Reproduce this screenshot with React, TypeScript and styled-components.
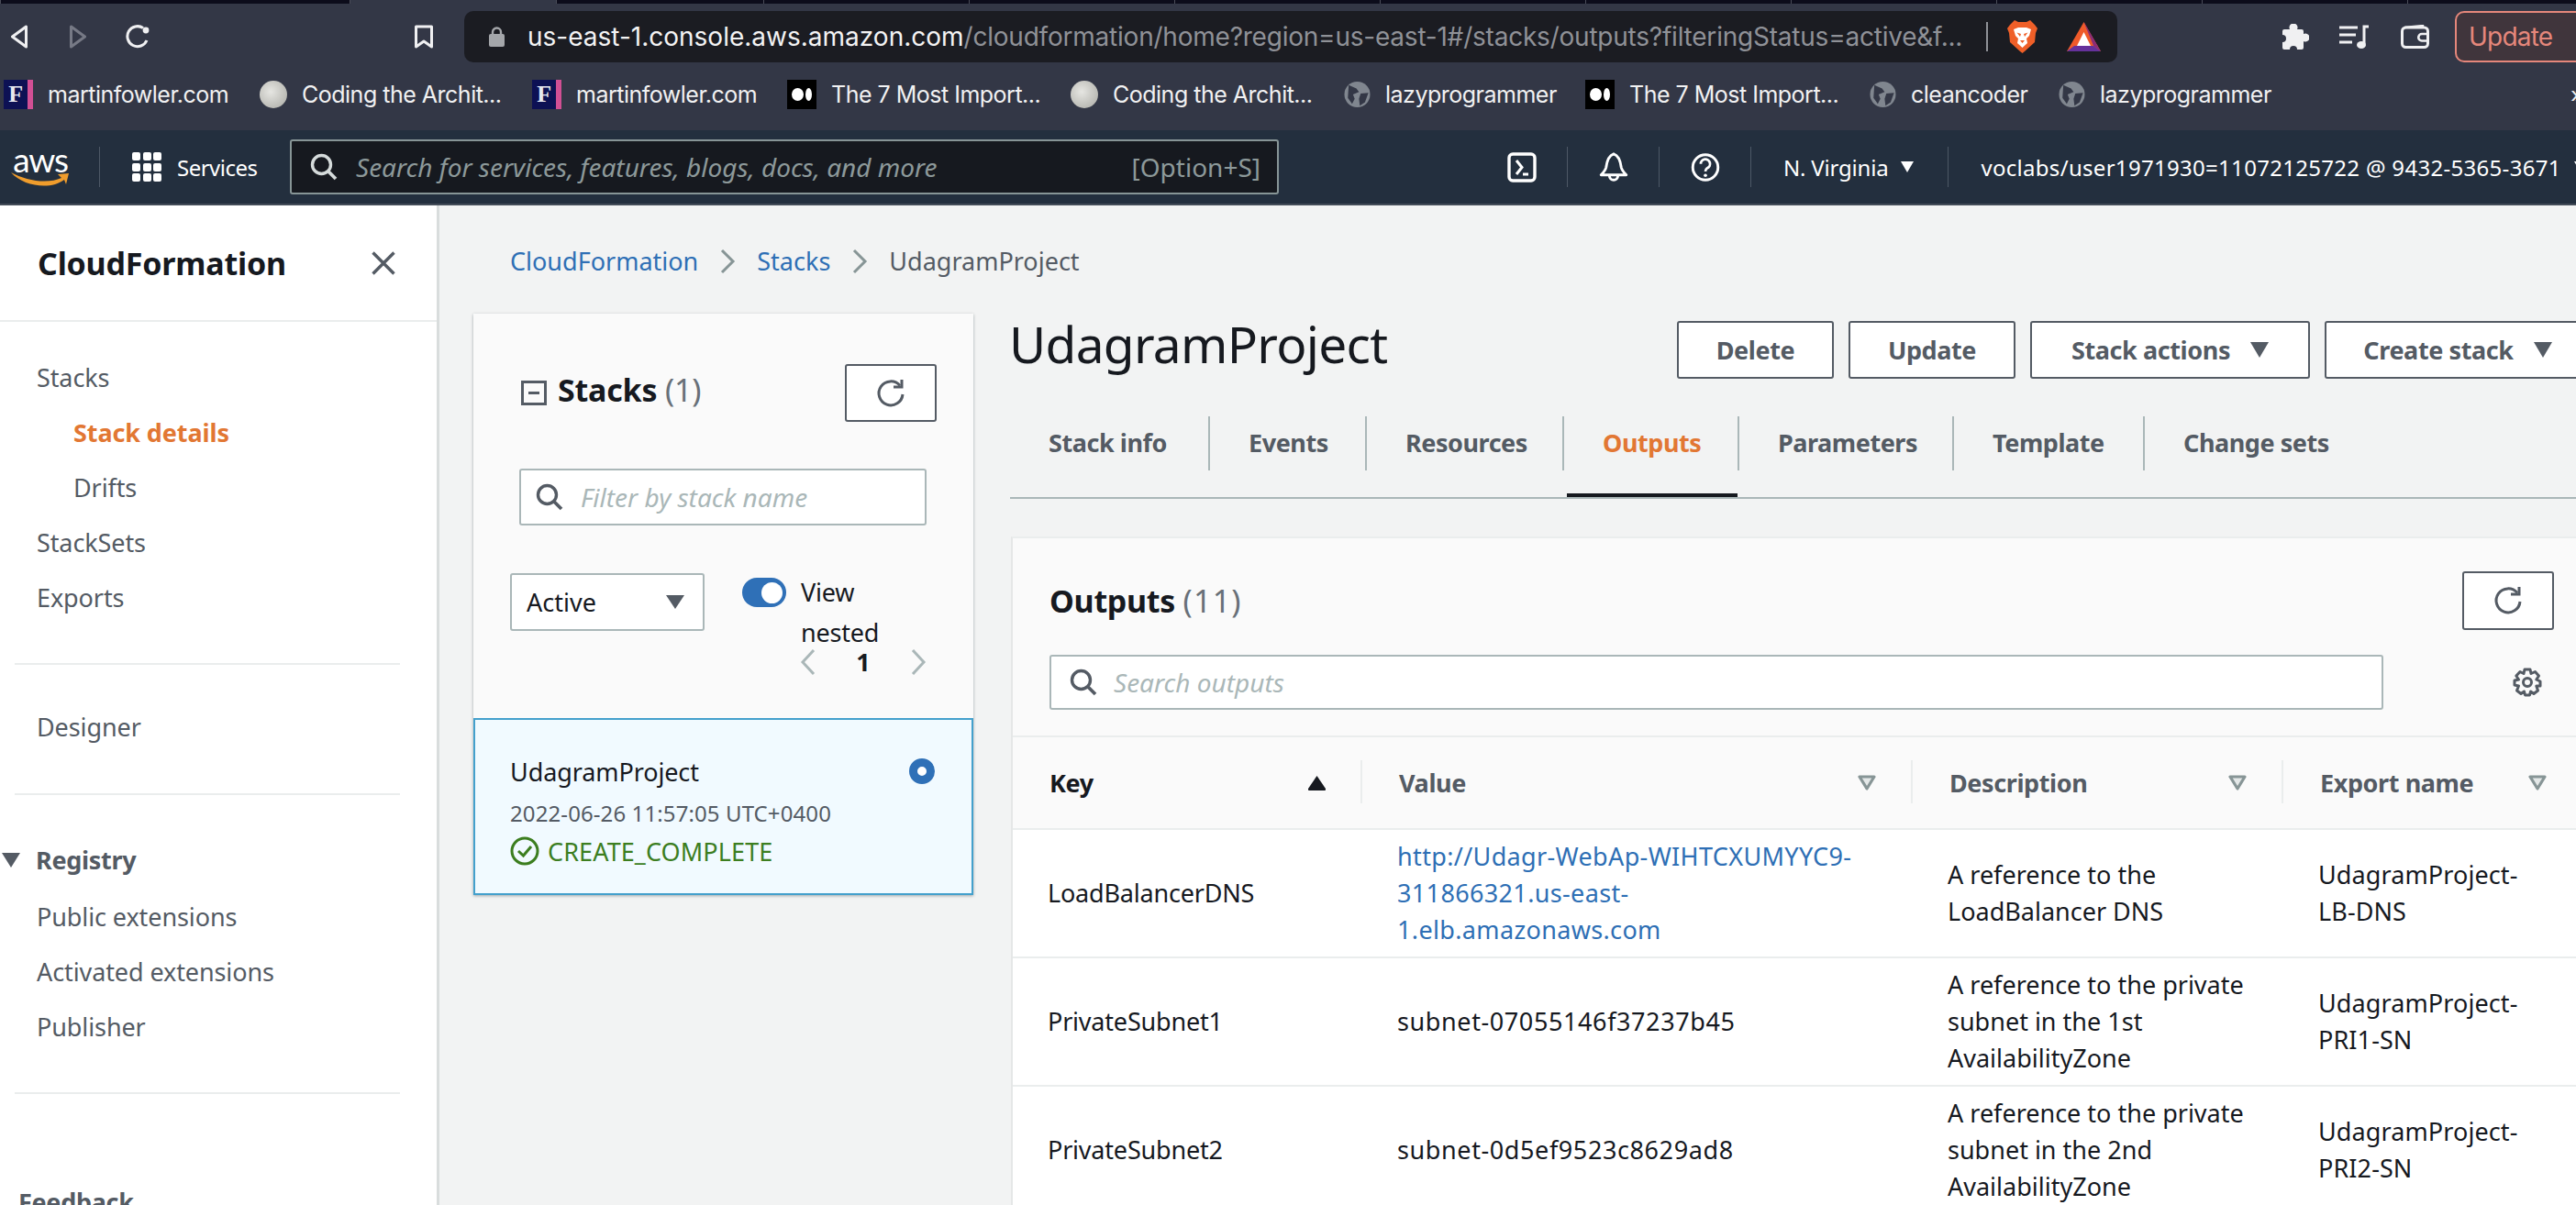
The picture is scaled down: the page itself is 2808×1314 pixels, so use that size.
import React from "react";
import styled, { createGlobalStyle } from "styled-components";

const GlobalStyle = createGlobalStyle`
  html, body { margin: 0; padding: 0; background: #f2f3f3; }
  * { box-sizing: border-box; }
`;

const UI_FONT = `"Noto Sans", "Open Sans", "Liberation Sans", sans-serif`;
const CHROME_FONT = `Inter, "Liberation Sans", sans-serif`;

const Shell = styled.div`
  width: 2808px;
  height: 1314px;
  overflow: hidden;
  display: flex;
  flex-direction: column;
  font-family: ${UI_FONT};
  color: #16191f;
`;

/* browser chrome */
const TabStrip = styled.div`
  height: 4px;
  flex-shrink: 0;
  background: #0c0c1b;
  display: grid;
  grid-template-columns: 381px 225px 226px repeat(9, 224px);
`;

const TabSlot = styled.div<{ $active?: boolean }>`
  background: ${(p) => (p.$active ? "#333746" : "transparent")};
  border-left: 1px solid #4a4c58;
`;

const BrowserBar = styled.div`
  height: 138px;
  flex-shrink: 0;
  background: #333746;
  display: flex;
  flex-direction: column;
  font-family: ${CHROME_FONT};
`;

const ToolbarRow = styled.div`
  height: 72px;
  padding-top: 8px;
  display: flex;
  align-items: flex-start;
  gap: 22px;
`;

const ToolSlot = styled.div<{ $ml?: number }>`
  width: 42px;
  height: 56px;
  margin-left: ${(p) => p.$ml ?? 0}px;
  flex-shrink: 0;
  display: flex;
  align-items: center;
  justify-content: center;
`;

const UrlBar = styled.div`
  width: 1802px;
  height: 56px;
  margin-left: 1px;
  flex-shrink: 0;
  background: #1b1c22;
  border-radius: 10px;
  display: flex;
  align-items: center;
  padding-left: 27px;
`;

const UrlText = styled.div`
  margin-left: 25px;
  width: 1580px;
  font-size: 28px;
  letter-spacing: 0;
  white-space: nowrap;
  overflow: hidden;
  color: #f3f3f4;
`;

const UrlPath = styled.span`
  color: #8f9197;
  letter-spacing: -0.22px;
`;

const UrlDivider = styled.div`
  width: 2px;
  height: 32px;
  margin-left: 10px;
  flex-shrink: 0;
  background: #8f9197;
`;

const UrlIcons = styled.div`
  display: flex;
  align-items: center;
  gap: 32px;
  margin-left: 21px;
  flex-shrink: 0;
`;

const UpdateButton = styled.div`
  width: 180px;
  height: 56px;
  flex-shrink: 0;
  border: 2px solid #e5877b;
  border-radius: 10px;
  background: #40353c;
  color: #e5877b;
  font-size: 28px;
  letter-spacing: -0.8px;
  padding-left: 13px;
  display: flex;
  align-items: center;
  gap: 28px;
`;

const UpdateDots = styled.svg`
  flex-shrink: 0;
`;

const BookmarksRow = styled.div`
  height: 66px;
  padding: 0 0 12px 4px;
  display: flex;
  align-items: center;
`;

const Bookmark = styled.div<{ $w?: number }>`
  width: ${(p) => (p.$w ? `${p.$w}px` : "auto")};
  flex-shrink: 0;
  display: flex;
  align-items: center;
  gap: 16px;
  font-size: 25px;
  letter-spacing: -0.5px;
  color: #f1f1f2;
  white-space: nowrap;
`;

const BookmarksMore = styled.div`
  margin-left: auto;
  color: #f1f1f2;
  font-size: 24px;
  width: 6px;
  overflow: hidden;
`;

const FowlerIcon = styled.div`
  width: 32px;
  height: 32px;
  background: #0d1154;
  border-right: 6px solid #d14f94;
  color: #e8e8f0;
  font: 700 26px/32px "Liberation Serif", serif;
  text-align: center;
`;

const MoonIcon = styled.div`
  width: 30px;
  height: 30px;
  border-radius: 50%;
  background: radial-gradient(circle at 40% 40%, #e6e6e2, #a9a9a3);
`;

const MediumIcon = styled.div`
  width: 32px;
  height: 32px;
  background: #000;
  display: flex;
  align-items: center;
  justify-content: center;
  gap: 2px;
`;

const MediumDot = styled.div<{ $w: number }>`
  width: ${(p) => p.$w}px;
  height: 14px;
  border-radius: 50%;
  background: #fff;
`;

/* aws nav */
const ConsoleNav = styled.div`
  height: 82px;
  flex-shrink: 0;
  background: #232f3e;
  border-bottom: 2px solid #434c58;
  display: flex;
  align-items: center;
  color: #fff;
  padding-left: 12px;
`;

const AwsLogo = styled.div`
  width: 64px;
  height: 46px;
  position: relative;
  flex-shrink: 0;
  font: 400 37px/30px Lato, "Open Sans", sans-serif;
  letter-spacing: -1.2px;
  color: #fff;
  text-align: center;
`;

const AwsSmile = styled.svg`
  position: absolute;
  left: 0;
  top: 29px;
`;

const NavDivider = styled.div<{ $ml?: number }>`
  width: 1px;
  height: 44px;
  flex-shrink: 0;
  margin-left: ${(p) => p.$ml ?? 0}px;
  background: #4d5866;
`;

const ServicesButton = styled.div`
  display: flex;
  align-items: center;
  flex-shrink: 0;
  gap: 17px;
  margin-left: 35px;
  font-size: 24px;
  letter-spacing: -0.5px;
  width: 172px;
`;

const GridIcon = styled.div`
  display: grid;
  grid-template-columns: repeat(3, 9px);
  grid-auto-rows: 9px;
  gap: 2.5px;
  flex-shrink: 0;
`;

const GridDot = styled.div`
  background: #fff;
  border-radius: 2px;
`;

const GlobalSearch = styled.div`
  width: 1078px;
  height: 60px;
  flex-shrink: 0;
  background: #16191f;
  border: 2px solid #879596;
  border-radius: 3px;
  display: flex;
  align-items: center;
  padding: 0 18px 0 20px;
  gap: 20px;
  color: #8d999a;
  font-size: 28px;
  letter-spacing: 0;
`;

const GlobalPlaceholder = styled.span`
  font-style: italic;
`;

const ShortcutHint = styled.span`
  margin-left: auto;
`;

const NavAction = styled.div<{ $ml?: number }>`
  width: 99px;
  flex-shrink: 0;
  margin-left: ${(p) => p.$ml ?? 0}px;
  display: flex;
  justify-content: center;
  align-items: center;
`;

const NavMenu = styled.div<{ $tracking: number }>`
  flex-shrink: 0;
  display: flex;
  align-items: center;
  white-space: nowrap;
  font-size: 24px;
  letter-spacing: ${(p) => p.$tracking}px;
  padding-left: 35px;
  gap: 14px;
`;

const NavCaret = styled.div`
  width: 0;
  height: 0;
  border-left: 7px solid transparent;
  border-right: 7px solid transparent;
  border-top: 12px solid #fff;
`;

/* page */
const PageBody = styled.div`
  flex: 1;
  display: flex;
  min-height: 0;
`;

const Sidebar = styled.aside`
  width: 479px;
  flex-shrink: 0;
  background: #fff;
  border-right: 3px solid #d9dddd;
  color: #545b64;
`;

const SidebarHeader = styled.div`
  height: 127px;
  border-bottom: 2px solid #eaeded;
  display: flex;
  align-items: center;
  justify-content: space-between;
  padding: 0 45px 0 41px;
`;

const SidebarTitle = styled.div`
  font-size: 34px;
  font-weight: 700;
  letter-spacing: -0.2px;
  color: #16191f;
`;

const NavGroup = styled.div<{ $top: number; $bottom: number }>`
  padding: ${(p) => p.$top}px 0 ${(p) => p.$bottom}px;
`;

const NavItem = styled.div<{ $indent?: boolean; $active?: boolean }>`
  height: 60px;
  padding-left: ${(p) => (p.$indent ? 80 : 40)}px;
  display: flex;
  align-items: center;
  font-size: 27px;
  font-weight: ${(p) => (p.$active ? 700 : 400)};
  letter-spacing: -0.1px;
  color: ${(p) => (p.$active ? "#e27733" : "#545b64")};
`;

const NavDividerLine = styled.div`
  height: 2px;
  margin: 0 40px 0 16px;
  background: #eaeded;
`;

const RegistryHeading = styled.div`
  height: 63px;
  padding-left: 2px;
  display: flex;
  align-items: center;
  gap: 17px;
  font-size: 27px;
  font-weight: 700;
  letter-spacing: -0.3px;
`;

const RegistryCaret = styled.div`
  width: 0;
  height: 0;
  border-left: 10px solid transparent;
  border-right: 10px solid transparent;
  border-top: 16px solid #545b64;
`;

const FeedbackLabel = styled.div`
  padding-left: 20px;
  margin-top: 99px;
  font-size: 27px;
  font-weight: 700;
  letter-spacing: -0.3px;
  color: #545b64;
`;

const Main = styled.main`
  flex: 1;
  min-width: 0;
`;

const Breadcrumbs = styled.div`
  height: 118px;
  padding: 40px 0 0 77px;
  display: flex;
  align-items: flex-start;
  font-size: 27px;
  letter-spacing: 0;
  line-height: 42px;
`;

const Crumb = styled.span<{ $current?: boolean }>`
  color: ${(p) => (p.$current ? "#545b64" : "#2e6fb5")};
`;

const CrumbChevron = styled.svg`
  margin: 7px 23px 0 23px;
  flex-shrink: 0;
`;

const Columns = styled.div`
  display: flex;
  padding-left: 37px;
  align-items: flex-start;
`;

const StackPanel = styled.section`
  width: 545px;
  height: 634px;
  flex-shrink: 0;
  background: #fafafa;
  box-shadow: 0 1px 3px rgba(0, 28, 36, 0.35);
  display: flex;
  flex-direction: column;
  padding-top: 55px;
`;

const PanelTitleRow = styled.div`
  display: flex;
  align-items: center;
  padding: 0 40px 0 52px;
  gap: 12px;
`;

const CollapseIcon = styled.svg`
  flex-shrink: 0;
`;

const PanelTitle = styled.div`
  font-size: 34px;
  font-weight: 700;
  letter-spacing: -0.2px;
  padding-bottom: 8px;
`;

const Count = styled.span`
  font-weight: 400;
  color: #687078;
`;

const WideCount = styled(Count)`
  letter-spacing: 1.2px;
`;

const RefreshButton = styled.div<{ $h: number }>`
  width: 100px;
  height: ${(p) => p.$h}px;
  margin-left: auto;
  flex-shrink: 0;
  background: #fff;
  border: 2px solid #545b64;
  border-radius: 3px;
  display: flex;
  align-items: center;
  justify-content: center;
`;

const FilterInput = styled.div`
  width: 444px;
  height: 62px;
  margin: 51px 0 0 50px;
  background: #fff;
  border: 2px solid #aab7b8;
  border-radius: 3px;
  display: flex;
  align-items: center;
  padding-left: 16px;
  gap: 19px;
  font-size: 28px;
  font-style: italic;
  color: #aab7b8;
  letter-spacing: 0;
`;

const FilterRow = styled.div`
  display: flex;
  align-items: flex-start;
  margin: 52px 0 0 40px;
`;

const StatusSelect = styled.div`
  width: 212px;
  height: 63px;
  background: #fff;
  border: 2px solid #aab7b8;
  border-radius: 3px;
  display: flex;
  align-items: center;
  justify-content: space-between;
  padding: 0 20px 0 16px;
  font-size: 27px;
`;

const SelectCaret = styled.div`
  width: 0;
  height: 0;
  border-left: 10px solid transparent;
  border-right: 10px solid transparent;
  border-top: 15px solid #545b64;
`;

const Toggle = styled.div`
  width: 48px;
  height: 32px;
  margin: 5px 0 0 41px;
  flex-shrink: 0;
  border-radius: 16px;
  background: #2f70b7;
  display: flex;
  align-items: center;
  justify-content: flex-end;
  padding-right: 4px;
`;

const ToggleKnob = styled.div`
  width: 23px;
  height: 23px;
  border-radius: 50%;
  background: #fff;
`;

const ToggleLabel = styled.div`
  margin: -1px 0 0 16px;
  width: 100px;
  height: 80px;
  font-size: 27px;
  line-height: 44px;
  letter-spacing: -0.2px;
`;

const Pager = styled.div`
  width: 138px;
  margin: 3px 0 0 356px;
  height: 30px;
  display: flex;
  align-items: center;
  justify-content: space-between;
  font-size: 27px;
  line-height: 30px;
  font-weight: 700;
`;

const StackCard = styled.div`
  margin-top: auto;
  height: 193px;
  background: #f1faff;
  border: 2px solid #44a0cc;
  padding: 33px 40px 0 38px;
`;

const StackNameRow = styled.div`
  display: flex;
  align-items: center;
  justify-content: space-between;
  height: 46px;
  font-size: 27px;
  letter-spacing: -0.1px;
`;

const RadioDot = styled.div`
  width: 28px;
  height: 28px;
  border-radius: 50%;
  background: #fff;
  border: 9px solid #2f70b7;
`;

const StackDate = styled.div`
  height: 46px;
  line-height: 46px;
  font-size: 24px;
  letter-spacing: 0.1px;
  color: #545b64;
`;

const StackStatus = styled.div`
  display: flex;
  align-items: center;
  gap: 9px;
  height: 36px;
  font-size: 27px;
  letter-spacing: 0.1px;
  color: #3c7e1f;
`;

const DetailColumn = styled.section`
  width: 1708px;
  margin-left: 39px;
  flex-shrink: 0;
`;

const DetailHeader = styled.div`
  display: flex;
  align-items: flex-start;
  gap: 16px;
  height: 112px;
  padding-top: 8px;
`;

const DetailTitle = styled.h1`
  margin: -7px 0 0;
  width: 712px;
  font-size: 55px;
  line-height: 64px;
  font-weight: 400;
  letter-spacing: -0.7px;
  flex-shrink: 0;
`;

const ActionButton = styled.div<{ $w: number }>`
  width: ${(p) => p.$w}px;
  height: 63px;
  flex-shrink: 0;
  background: #fff;
  border: 2px solid #545b64;
  border-radius: 3px;
  display: flex;
  align-items: center;
  justify-content: center;
  gap: 22px;
  font-size: 27px;
  font-weight: 700;
  letter-spacing: -0.4px;
  color: #545b64;
`;

const ButtonCaret = styled.div`
  width: 0;
  height: 0;
  border-left: 10px solid transparent;
  border-right: 10px solid transparent;
  border-top: 17px solid #545b64;
`;

const TabBar = styled.div`
  margin-left: 1px;
  height: 90px;
  border-bottom: 2px solid #aab7b8;
  display: flex;
  align-items: flex-start;
`;

const TabItem = styled.div<{ $active?: boolean; $w: number; $last?: boolean }>`
  width: ${(p) => p.$w}px;
  height: 88px;
  flex-shrink: 0;
  position: relative;
  padding-left: 42px;
  padding-top: 6px;
  font-size: 27px;
  line-height: 46px;
  font-weight: 700;
  letter-spacing: -0.45px;
  color: ${(p) => (p.$active ? "#e27733" : "#545b64")};
  white-space: nowrap;
  &::before {
    content: "";
    position: absolute;
    right: 0;
    top: 0;
    width: 2px;
    height: 59px;
    background: ${(p) => (p.$last ? "transparent" : "#aab7b8")};
  }
  &::after {
    content: "";
    position: absolute;
    left: 3px;
    right: 2px;
    bottom: 0;
    height: 4px;
    background: ${(p) => (p.$active ? "#16191f" : "transparent")};
  }
`;

const OutputsCard = styled.div`
  margin: 41px 0 0 2px;
  background: #fafafa;
  border-left: 2px solid #e5e7e7;
  border-top: 2px solid #eaeded;
  height: 740px;
`;

const CardTitleRow = styled.div`
  display: flex;
  align-items: center;
  margin-top: 36px;
  padding: 0 24px 0 40px;
`;

const CardTitle = styled.div`
  font-size: 34px;
  font-weight: 700;
  letter-spacing: -0.3px;
`;

const SearchRow = styled.div`
  display: flex;
  align-items: center;
  padding-left: 40px;
  margin-top: 27px;
`;

const SearchInput = styled.div`
  width: 1454px;
  height: 60px;
  background: #fff;
  border: 2px solid #aab7b8;
  border-radius: 3px;
  display: flex;
  align-items: center;
  padding-left: 20px;
  gap: 18px;
  font-size: 28px;
  font-style: italic;
  color: #aab7b8;
  letter-spacing: 0;
`;

const GearSlot = styled.div`
  margin-left: 141px;
  display: flex;
`;

const TableHead = styled.div`
  margin-top: 28px;
  height: 103px;
  border-top: 2px solid #eaeded;
  border-bottom: 2px solid #eaeded;
  display: grid;
  grid-template-columns: 381px 600px 404px 1fr;
`;

const HeadCell = styled.div<{ $primary?: boolean; $last?: boolean }>`
  position: relative;
  display: flex;
  align-items: center;
  justify-content: space-between;
  padding: 0 ${(p) => (p.$last ? 32 : 40)}px 0 40px;
  font-size: 27px;
  font-weight: 700;
  letter-spacing: -0.4px;
  color: ${(p) => (p.$primary ? "#16191f" : "#545b64")};
  &::after {
    content: "";
    display: ${(p) => (p.$last ? "none" : "block")};
    position: absolute;
    right: 0;
    top: 25px;
    width: 2px;
    height: 47px;
    background: #eaeded;
  }
`;

const TableRow = styled.div`
  height: 140px;
  background: #fff;
  border-bottom: 2px solid #eaeded;
  display: grid;
  grid-template-columns: 381px 600px 404px 1fr;
`;

const BodyCell = styled.div<{ $tracking: number }>`
  padding-left: 38px;
  display: flex;
  flex-direction: column;
  justify-content: center;
  font-size: 27px;
  line-height: 40px;
  letter-spacing: ${(p) => p.$tracking}px;
  color: #16191f;
  white-space: nowrap;
`;

const OutputLink = styled.span`
  display: block;
  color: #2e6fb5;
`;

const CellLine = styled.span`
  display: block;
`;

/* icons */
const stroke = (c: string, w = 2) => ({ fill: "none", stroke: c, strokeWidth: w });

const SearchGlyph = ({ color, size = 30 }: { color: string; size?: number }) => (
  <svg width={size} height={size} viewBox="0 0 30 30" style={{ flexShrink: 0 }}>
    <circle cx="12.5" cy="12.5" r="10" {...stroke(color, 3.4)} />
    <path d="M20 20 L28 28" {...stroke(color, 3.8)} />
  </svg>
);

const RefreshGlyph = () => (
  <svg width="32" height="32" viewBox="0 0 32 32">
    <path d="M26 7.5 A13 13 0 1 0 29 17" {...stroke("#545b64", 3)} />
    <path d="M19 9 H28 V1" {...stroke("#545b64", 3)} />
  </svg>
);

const FilterCaret = () => (
  <svg width="20" height="17" viewBox="0 0 20 17">
    <path d="M2 2 H18 L10 15 Z" fill="#e4e8e8" stroke="#879596" strokeWidth="3.2" strokeLinejoin="round" />
  </svg>
);

const GlobeIcon = () => (
  <svg width="29" height="28" viewBox="0 0 30 30">
    <circle cx="15" cy="15" r="15" fill="#80868f" />
    <path d="M5 4 L14 8 L17 12 L10 15 L12 20 L9 26 L4 19 Z M19 14 L28 13 L24 24 L18 28 L17 20 Z" fill="#333746" />
  </svg>
);

const BraveIcon = () => (
  <svg width="33" height="36" viewBox="0 0 33 36">
    <path d="M8 0 L12 2 H21 L25 0 L30 5 L33 9 L31 14 L30 24 L19 34 L16.5 36 L14 34 L3 24 L2 14 L0 9 L3 5 Z" fill="#ef5f28" />
    <path d="M7 10 L12 8 H21 L26 10 L24 17 L21 20 L22 25 L16.5 30 L11 25 L12 20 L9 17 Z" fill="#fff" />
    <path d="M10.5 13.5 L15 15 L14 18 Z M22.5 13.5 L18 15 L19 18 Z M14 22 H19 L16.5 25 Z" fill="#ef5f28" />
  </svg>
);

const BatIcon = () => (
  <svg width="37" height="32" viewBox="0 0 37 32">
    <path d="M18.5 0 L37 32 H0 Z" fill="#ef5a2a" />
    <path d="M18.5 0 L37 32 L29 26 Z" fill="#8a2c78" />
    <path d="M0 32 L8 26 H29 L37 32 Z" fill="#65319b" />
    <path d="M18.5 11 L26 26 H11 Z" fill="#fff" />
  </svg>
);

const bookmarks = [
  { icon: "f", label: "martinfowler.com", w: 279 },
  { icon: "moon", label: "Coding the Archit...", w: 297 },
  { icon: "f", label: "martinfowler.com", w: 278 },
  { icon: "medium", label: "The 7 Most Import...", w: 309 },
  { icon: "moon", label: "Coding the Archit...", w: 298 },
  { icon: "globe", label: "lazyprogrammer", w: 263 },
  { icon: "medium", label: "The 7 Most Import...", w: 310 },
  { icon: "globe", label: "cleancoder", w: 206 },
  { icon: "globe", label: "lazyprogrammer", w: 0 },
];

const tabs = [
  { label: "Stack info", w: 218 },
  { label: "Events", w: 171 },
  { label: "Resources", w: 215 },
  { label: "Outputs", w: 191, active: true },
  { label: "Parameters", w: 234 },
  { label: "Template", w: 208 },
  { label: "Change sets", w: 300, last: true },
];

const rows = [
  {
    key: "LoadBalancerDNS",
    value: ["http://Udagr-WebAp-WIHTCXUMYYC9-", "311866321.us-east-", "1.elb.amazonaws.com"],
    link: true,
    description: ["A reference to the", "LoadBalancer DNS"],
    exportName: ["UdagramProject-", "LB-DNS"],
  },
  {
    key: "PrivateSubnet1",
    value: ["subnet-07055146f37237b45"],
    description: ["A reference to the private", "subnet in the 1st", "AvailabilityZone"],
    exportName: ["UdagramProject-", "PRI1-SN"],
  },
  {
    key: "PrivateSubnet2",
    value: ["subnet-0d5ef9523c8629ad8"],
    description: ["A reference to the private", "subnet in the 2nd", "AvailabilityZone"],
    exportName: ["UdagramProject-", "PRI2-SN"],
  },
];

const BookmarkIcon = ({ kind }: { kind: string }) => {
  if (kind === "f") return <FowlerIcon>F</FowlerIcon>;
  if (kind === "moon") return <MoonIcon />;
  if (kind === "medium")
    return (
      <MediumIcon>
        <MediumDot $w={13} />
        <MediumDot $w={7} />
      </MediumIcon>
    );
  return <GlobeIcon />;
};

export default function App() {
  return (
    <Shell>
      <GlobalStyle />
      <TabStrip>
        {Array.from({ length: 12 }).map((_, i) => (
          <TabSlot key={i} $active={i === 1} />
        ))}
      </TabStrip>

      <BrowserBar>
        <ToolbarRow>
          <ToolSlot>
            <svg width="20" height="26" viewBox="0 0 20 26">
              <path d="M17.5 2 L2.5 13 L17.5 24 Z" {...stroke("#f0f0f2", 3)} strokeLinejoin="round" />
            </svg>
          </ToolSlot>
          <ToolSlot>
            <svg width="20" height="26" viewBox="0 0 20 26">
              <path d="M2.5 2 L17.5 13 L2.5 24 Z" {...stroke("#767985", 3)} strokeLinejoin="round" />
            </svg>
          </ToolSlot>
          <ToolSlot>
            <svg width="28" height="26" viewBox="0 0 28 26">
              <path d="M21 3.5 A11 11 0 1 0 25 17" {...stroke("#f0f0f2", 3)} />
              <circle cx="24" cy="6" r="3.4" fill="#f0f0f2" />
            </svg>
          </ToolSlot>
          <ToolSlot $ml={249}>
            <svg width="22" height="26" viewBox="0 0 22 26">
              <path d="M2.5 2 H19.5 V24 L11 18 L2.5 24 Z" {...stroke("#f0f0f2", 3)} strokeLinejoin="round" />
            </svg>
          </ToolSlot>
          <UrlBar>
            <svg width="17" height="22" viewBox="0 0 17 22">
              <path d="M4 9 V6 A4.5 4.5 0 0 1 13 6 V9" {...stroke("#a4a6aa", 2.4)} />
              <rect x="0" y="8" width="17" height="14" rx="2" fill="#a4a6aa" />
            </svg>
            <UrlText>
              us-east-1.console.aws.amazon.com
              <UrlPath>/cloudformation/home?region=us-east-1#/stacks/outputs?filteringStatus=active&amp;f...</UrlPath>
            </UrlText>
            <UrlDivider />
            <UrlIcons>
              <BraveIcon />
              <BatIcon />
            </UrlIcons>
          </UrlBar>
          <ToolSlot $ml={151}>
            <svg width="29" height="28" viewBox="0 0 29 28">
              <path d="M2 6 H8 A4.5 4.5 0 1 1 16 6 H21 A2 2 0 0 1 23 8 V11 A4.5 4.5 0 1 1 23 19 V26 A2 2 0 0 1 21 28 H16 A4 4 0 0 0 8 28 H2 A2 2 0 0 1 0 26 V20 A4 4 0 0 0 0 12 V8 A2 2 0 0 1 2 6 Z" fill="#f0f0f2" />
            </svg>
          </ToolSlot>
          <ToolSlot>
            <svg width="32" height="26" viewBox="0 0 32 26">
              <path d="M0 3 H20 M0 11 H18 M0 19 H14" {...stroke("#f0f0f2", 3)} />
              <path d="M27 21 V2 H32" {...stroke("#f0f0f2", 3)} />
              <ellipse cx="24" cy="22" rx="5" ry="4" fill="#f0f0f2" />
            </svg>
          </ToolSlot>
          <ToolSlot $ml={3}>
            <svg width="32" height="26" viewBox="0 0 32 26">
              <rect x="1.5" y="3" width="28" height="21.5" rx="4" {...stroke("#f0f0f2", 3)} />
              <path d="M4 3 L24 1 V4" {...stroke("#f0f0f2", 2.4)} />
              <path d="M31 10 H23 A3.5 3.5 0 0 0 23 17.5 H31" {...stroke("#f0f0f2", 2.6)} />
            </svg>
          </ToolSlot>
          <UpdateButton>
            Update
            <UpdateDots width="6" height="30" viewBox="0 0 6 30">
              <circle cx="3" cy="4" r="2.6" fill="#e5877b" />
              <circle cx="3" cy="15" r="2.6" fill="#e5877b" />
              <circle cx="3" cy="26" r="2.6" fill="#e5877b" />
            </UpdateDots>
          </UpdateButton>
        </ToolbarRow>
        <BookmarksRow>
          {bookmarks.map((b, i) => (
            <Bookmark key={i} $w={b.w}>
              <BookmarkIcon kind={b.icon} />
              {b.label}
            </Bookmark>
          ))}
          <BookmarksMore>»</BookmarksMore>
        </BookmarksRow>
      </BrowserBar>

      <ConsoleNav>
        <AwsLogo>
          aws
          <AwsSmile width="64" height="17" viewBox="0 0 64 17">
            <path d="M0 0 C16 9 40 13 55 6 L51 2 L63 1 L60 13 L58 8 C44 19 14 16 0 0 Z" fill="#f09d2c" />
          </AwsSmile>
        </AwsLogo>
        <NavDivider $ml={32} />
        <ServicesButton>
          <GridIcon>
            {Array.from({ length: 9 }).map((_, i) => (
              <GridDot key={i} />
            ))}
          </GridIcon>
          Services
        </ServicesButton>
        <GlobalSearch>
          <SearchGlyph color="#d5dbdb" />
          <GlobalPlaceholder>Search for services, features, blogs, docs, and more</GlobalPlaceholder>
          <ShortcutHint>[Option+S]</ShortcutHint>
        </GlobalSearch>
        <NavAction $ml={215}>
          <svg width="32" height="33" viewBox="0 0 32 33">
            <rect x="2" y="2" width="28" height="29" rx="4" {...stroke("#fff", 3.4)} />
            <path d="M10 9 L16 16.5 L10 24 M17 24 H23" {...stroke("#fff", 3)} />
          </svg>
        </NavAction>
        <NavDivider />
        <NavAction>
          <svg width="32" height="33" viewBox="0 0 34 36">
            <path d="M17 2 C11 4 9 10 8 18 C7 22 4 25 2 27 H32 C30 25 27 22 26 18 C25 10 23 4 17 2 Z" {...stroke("#fff", 3.2)} strokeLinejoin="round" />
            <path d="M12 28 A5 5 0 0 0 22 28" {...stroke("#fff", 3.2)} />
          </svg>
        </NavAction>
        <NavDivider />
        <NavAction>
          <svg width="32" height="33" viewBox="0 0 34 36">
            <circle cx="17" cy="18" r="15" {...stroke("#fff", 3.2)} />
            <path d="M11.5 14 A5.5 5.5 0 1 1 19 19 C17.5 20 17 21 17 23" {...stroke("#fff", 3)} />
            <circle cx="17" cy="27.5" r="2" fill="#fff" />
          </svg>
        </NavAction>
        <NavDivider />
        <NavMenu $tracking={-0.2}>
          N. Virginia
          <NavCaret />
        </NavMenu>
        <NavDivider $ml={37} />
        <NavMenu $tracking={0.3}>
          voclabs/user1971930=11072125722 @ 9432-5365-3671
          <NavCaret />
        </NavMenu>
      </ConsoleNav>

      <PageBody>
        <Sidebar>
          <SidebarHeader>
            <SidebarTitle>CloudFormation</SidebarTitle>
            <svg width="26" height="26" viewBox="0 0 26 26">
              <path d="M1.5 1.5 L24.5 24.5 M24.5 1.5 L1.5 24.5" {...stroke("#545b64", 3.4)} />
            </svg>
          </SidebarHeader>
          <NavGroup $top={30} $bottom={42}>
            <NavItem>Stacks</NavItem>
            <NavItem $indent $active>
              Stack details
            </NavItem>
            <NavItem $indent>Drifts</NavItem>
            <NavItem>StackSets</NavItem>
            <NavItem>Exports</NavItem>
          </NavGroup>
          <NavDividerLine />
          <NavGroup $top={37} $bottom={43}>
            <NavItem>Designer</NavItem>
          </NavGroup>
          <NavDividerLine />
          <NavGroup $top={39} $bottom={42}>
            <RegistryHeading>
              <RegistryCaret />
              Registry
            </RegistryHeading>
            <NavItem>Public extensions</NavItem>
            <NavItem>Activated extensions</NavItem>
            <NavItem>Publisher</NavItem>
          </NavGroup>
          <NavDividerLine />
          <FeedbackLabel>Feedback</FeedbackLabel>
        </Sidebar>

        <Main>
          <Breadcrumbs>
            <Crumb>CloudFormation</Crumb>
            <CrumbChevron width="18" height="28" viewBox="0 0 18 28">
              <path d="M3 2 L15 14 L3 26" {...stroke("#879596", 3)} />
            </CrumbChevron>
            <Crumb>Stacks</Crumb>
            <CrumbChevron width="18" height="28" viewBox="0 0 18 28">
              <path d="M3 2 L15 14 L3 26" {...stroke("#879596", 3)} />
            </CrumbChevron>
            <Crumb $current>UdagramProject</Crumb>
          </Breadcrumbs>

          <Columns>
            <StackPanel>
              <PanelTitleRow>
                <CollapseIcon width="28" height="27" viewBox="0 0 28 27">
                  <rect x="1.5" y="1.5" width="25" height="24" {...stroke("#545b64", 3)} />
                  <path d="M8 13.5 H20" {...stroke("#545b64", 3)} />
                </CollapseIcon>
                <PanelTitle>
                  Stacks <Count>(1)</Count>
                </PanelTitle>
                <RefreshButton $h={63}>
                  <RefreshGlyph />
                </RefreshButton>
              </PanelTitleRow>
              <FilterInput>
                <SearchGlyph color="#545b64" />
                Filter by stack name
              </FilterInput>
              <FilterRow>
                <StatusSelect>
                  Active
                  <SelectCaret />
                </StatusSelect>
                <Toggle>
                  <ToggleKnob />
                </Toggle>
                <ToggleLabel>
                  View
                  <br />
                  nested
                </ToggleLabel>
              </FilterRow>
              <Pager>
                <svg width="18" height="30" viewBox="0 0 18 30">
                  <path d="M15 2 L3 15 L15 28" {...stroke("#aab7b8", 3)} />
                </svg>
                1
                <svg width="18" height="30" viewBox="0 0 18 30">
                  <path d="M3 2 L15 15 L3 28" {...stroke("#aab7b8", 3)} />
                </svg>
              </Pager>
              <StackCard>
                <StackNameRow>
                  UdagramProject
                  <RadioDot />
                </StackNameRow>
                <StackDate>2022-06-26 11:57:05 UTC+0400</StackDate>
                <StackStatus>
                  <svg width="32" height="32" viewBox="0 0 32 32" style={{ flexShrink: 0 }}>
                    <circle cx="16" cy="16" r="14" {...stroke("#3c7e1f", 3)} />
                    <path d="M9 16 L14.5 21 L23 11" {...stroke("#3c7e1f", 3)} />
                  </svg>
                  CREATE_COMPLETE
                </StackStatus>
              </StackCard>
            </StackPanel>

            <DetailColumn>
              <DetailHeader>
                <DetailTitle>UdagramProject</DetailTitle>
                <ActionButton $w={171}>Delete</ActionButton>
                <ActionButton $w={182}>Update</ActionButton>
                <ActionButton $w={305}>
                  Stack actions
                  <ButtonCaret />
                </ActionButton>
                <ActionButton $w={290}>
                  Create stack
                  <ButtonCaret />
                </ActionButton>
              </DetailHeader>

              <TabBar>
                {tabs.map((t) => (
                  <TabItem key={t.label} $w={t.w} $active={t.active} $last={t.last}>
                    {t.label}
                  </TabItem>
                ))}
              </TabBar>

              <OutputsCard>
                <CardTitleRow>
                  <CardTitle>
                    Outputs <WideCount>(11)</WideCount>
                  </CardTitle>
                  <RefreshButton $h={64}>
                    <RefreshGlyph />
                  </RefreshButton>
                </CardTitleRow>
                <SearchRow>
                  <SearchInput>
                    <SearchGlyph color="#545b64" />
                    Search outputs
                  </SearchInput>
                  <GearSlot>
                    <svg width="32" height="32" viewBox="0 0 32 32">
                      <path d="M13 2 H19 L20 6.5 L24.5 4.5 L28.5 9 L25.8 13 L30 15 V20 L25.8 20 L27.5 25 L23 28.5 L19.5 26 L18.5 30 H13.5 L12.5 26 L9 28.5 L4.5 25 L6.5 20 L2 19 V14 L6.5 13 L3.8 9 L8 4.5 L12 6.5 Z" {...stroke("#545b64", 3)} strokeLinejoin="round" />
                      <circle cx="16" cy="16" r="4.5" {...stroke("#545b64", 3)} />
                    </svg>
                  </GearSlot>
                </SearchRow>
                <TableHead>
                  <HeadCell $primary>
                    Key
                    <svg width="19" height="16" viewBox="0 0 19 16">
                      <path d="M9.5 0 L19 14 A1.5 1.5 0 0 1 18 16 H1 A1.5 1.5 0 0 1 0 14 Z" fill="#16191f" />
                    </svg>
                  </HeadCell>
                  <HeadCell>
                    Value
                    <FilterCaret />
                  </HeadCell>
                  <HeadCell>
                    Description
                    <FilterCaret />
                  </HeadCell>
                  <HeadCell $last>
                    Export name
                    <FilterCaret />
                  </HeadCell>
                </TableHead>
                {rows.map((r) => (
                  <TableRow key={r.key}>
                    <BodyCell $tracking={-0.2}>{r.key}</BodyCell>
                    <BodyCell $tracking={r.link ? 0.35 : 0.6}>
                      {r.value.map((v) =>
                        r.link ? <OutputLink key={v}>{v}</OutputLink> : <CellLine key={v}>{v}</CellLine>
                      )}
                    </BodyCell>
                    <BodyCell $tracking={0}>
                      {r.description.map((v) => (
                        <CellLine key={v}>{v}</CellLine>
                      ))}
                    </BodyCell>
                    <BodyCell $tracking={0.1}>
                      {r.exportName.map((v) => (
                        <CellLine key={v}>{v}</CellLine>
                      ))}
                    </BodyCell>
                  </TableRow>
                ))}
              </OutputsCard>
            </DetailColumn>
          </Columns>
        </Main>
      </PageBody>
    </Shell>
  );
}
